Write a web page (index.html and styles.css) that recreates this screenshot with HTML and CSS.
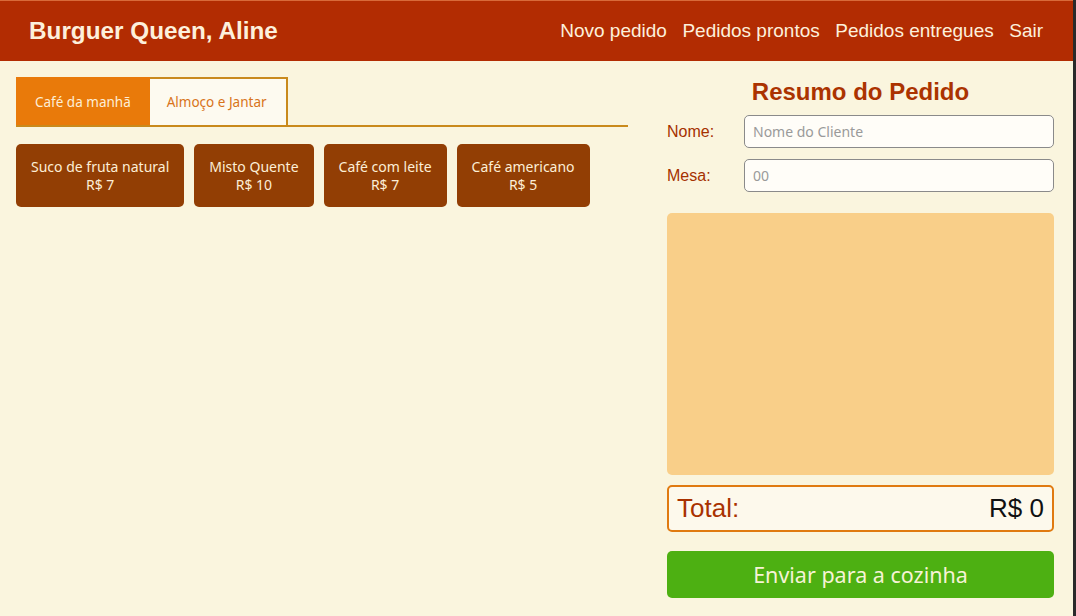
FILE: index.html
```html
<!DOCTYPE html>
<html lang="pt-BR">
<head>
<meta charset="utf-8">
<title>Burguer Queen</title>
<link rel="stylesheet" href="styles.css">
</head>
<body>
<header class="topbar">
  <h1 class="brand">Burguer Queen, Aline</h1>
  <nav class="nav">
    <a class="nav-link" href="#">Novo pedido</a>
    <a class="nav-link" href="#">Pedidos prontos</a>
    <a class="nav-link" href="#">Pedidos entregues</a>
    <a class="nav-link" href="#">Sair</a>
  </nav>
</header>
<main class="main">
  <section class="menu">
    <div class="tabs">
      <button class="tab tab-active">Café da manhã</button>
      <button class="tab">Almoço e Jantar</button>
    </div>
    <div class="items">
      <button class="item">Suco de fruta natural<br>R$ 7</button>
      <button class="item">Misto Quente<br>R$ 10</button>
      <button class="item">Café com leite<br>R$ 7</button>
      <button class="item">Café americano<br>R$ 5</button>
    </div>
  </section>
  <section class="summary">
    <h2 class="summary-title">Resumo do Pedido</h2>
    <div class="field">
      <label class="field-label">Nome:</label>
      <input class="field-input" type="text" placeholder="Nome do Cliente">
    </div>
    <div class="field">
      <label class="field-label">Mesa:</label>
      <input class="field-input" type="text" placeholder="00">
    </div>
    <div class="order-list"></div>
    <div class="total">
      <span class="total-label">Total:</span>
      <span class="total-value">R$ 0</span>
    </div>
    <button class="send">Enviar para a cozinha</button>
  </section>
</main>
</body>
</html>
```

FILE: styles.css
```css
* { box-sizing: border-box; }
html, body { margin: 0; padding: 0; }
body {
  background: #faf5de;
  font-family: "Liberation Sans", Arial, sans-serif;
  height: 616px;
  overflow: hidden;
  border-right: 3px solid #2a2a2a;
}
.topbar {
  height: 61px;
  background: #b22c02;
  display: flex;
  align-items: center;
  justify-content: space-between;
  padding: 0 30px 0 29px;
  border-top: 1px solid #d86a3a;
}
.brand {
  margin: 0;
  color: #fdf0dc;
  font-size: 24.3px;
  font-weight: bold;
}
.nav { display: flex; gap: 15.5px; }
.nav-link {
  color: #fdf0dc;
  text-decoration: none;
  font-size: 19px;
}
.main {
  display: flex;
  gap: 39px;
  padding: 16px 19px 0 16px;
}
.menu { width: 612px; }
.tabs {
  display: flex;
  border-bottom: 2px solid #c98a1c;
}
.tab {
  font-family: "Noto Sans", "Open Sans", sans-serif;
  font-size: 13.5px;
  height: 48px;
  border: 2px solid #c98a1c;
  border-bottom: none;
  background: #fdfaf0;
  color: #d8741a;
  padding: 0 19px 0 17px;
  cursor: pointer;
}
.tab-active {
  background: #e97a0a;
  color: #fdeed6;
  border-color: #e97a0a;
  padding: 0 17px;
}
.tab + .tab { border-left: none; }
.items {
  display: flex;
  gap: 10px;
  padding-top: 17px;
}
.item {
  font-family: "Noto Sans", "Open Sans", sans-serif;
  font-size: 14px;
  line-height: 18px;
  height: 63px;
  background: #923e04;
  color: #fdeed6;
  border: none;
  border-radius: 5px;
  padding: 0 15px;
}
.summary {
  width: 387px;
  display: flex;
  flex-direction: column;
}
.summary-title {
  margin: 0;
  text-align: center;
  color: #ab3300;
  font-size: 24px;
  font-weight: bold;
  height: 38px;
  line-height: 28px;
  padding-top: 1px;
}
.field {
  display: flex;
  align-items: center;
  margin-bottom: 11px;
}
.field-label {
  width: 77px;
  color: #a53100;
  font-size: 16px;
}
.field-input {
  flex: 1;
  height: 33px;
  border: 1px solid #8a8a8a;
  border-radius: 5px;
  background: #fffdf8;
  padding: 0 8px;
  font-family: "Noto Sans", "Open Sans", sans-serif;
  font-size: 14px;
}
.field-input::placeholder { color: #9a9a9a; }
.order-list {
  margin-top: 10px;
  height: 262px;
  background: #f9cf89;
  border-radius: 5px;
}
.total {
  margin-top: 10px;
  height: 47px;
  border: 2px solid #e07a10;
  border-radius: 5px;
  display: flex;
  justify-content: space-between;
  align-items: center;
  padding: 0 8px 0 8px;
  font-size: 26px;
  background: #fdf9ec;
}
.total-label { color: #a93200; }
.total-value { color: #111; }
.send {
  margin-top: 19px;
  height: 47px;
  border: none;
  border-radius: 5px;
  background: #4db012;
  color: #f6f3d6;
  font-family: "Noto Sans", "Open Sans", sans-serif;
  font-size: 21.5px;
}
```
